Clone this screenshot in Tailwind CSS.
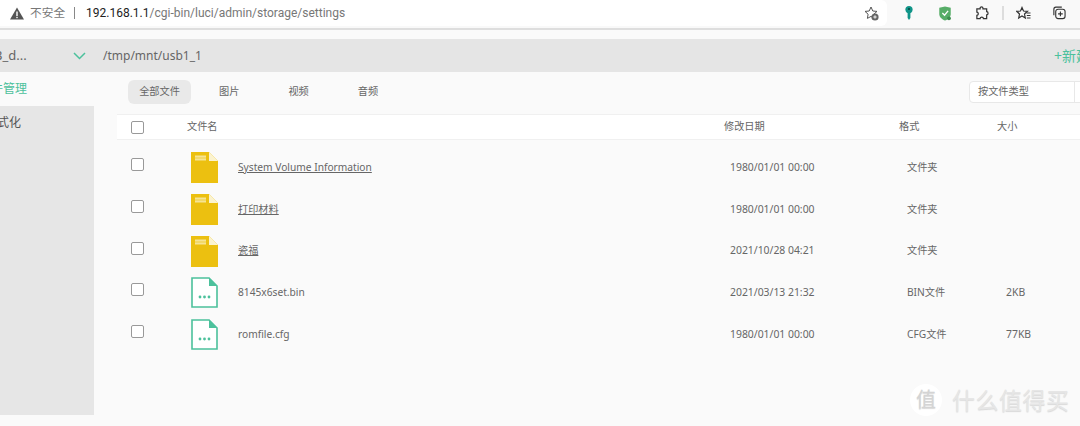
<!DOCTYPE html>
<html lang="zh-CN">
<head>
  <meta charset="UTF-8" />
  <title>存储管理</title>
  <script src="https://cdn.jsdelivr.net/npm/@tailwindcss/browser@4"></script>
</head>
<body class="w-[1080px] h-[426px] overflow-hidden relative bg-[#fafafa] text-[#666] text-[10.2px] font-['Noto_Sans','Noto_Sans_CJK_SC',sans-serif]">

  <!-- browser toolbar -->
  <header class="h-[30px] bg-[#f9f9f9] border-b-2 border-[#dedede] flex items-start">
    <div class="w-[887px] h-[26px] bg-white rounded-r-md flex items-center">
      <svg class="ml-[10px] w-[14px] h-[13px]" viewBox="0 0 14 13"><path d="M7 0.5 L14 12.5 H0 Z" fill="#555"/><rect x="6.3" y="4.5" width="1.4" height="4.5" fill="#fff"/><rect x="6.3" y="9.8" width="1.4" height="1.4" fill="#fff"/></svg>
      <span class="ml-[6px] text-[11.7px] text-[#777]">不安全</span>
      <span class="ml-[9px] w-px h-[12px] bg-[#888]"></span>
      <span class="ml-[11px] text-[12px] text-[#222] font-['Roboto','Noto_Sans_CJK_SC',sans-serif]">192.168.1.1<span class="text-[#777]">/cgi-bin/luci/admin/storage/settings</span></span>
      <svg class="ml-auto mr-[8px] w-[15px] h-[15px]" viewBox="0 0 15 15"><path d="M7 1 L8.8 5 L13 5.4 L9.9 8.2 L10.6 12.4 L7 10.4 L3.4 12.4 L4.1 8.2 L1 5.4 L5.2 5 Z" fill="none" stroke="#555" stroke-width="1"/><circle cx="11" cy="11" r="3.6" fill="#666"/><path d="M9.3 11 H12.7 M11 9.3 V12.7" stroke="#fff" stroke-width="0.9"/></svg>
    </div>
    <div class="flex items-center h-[26px] ml-[17px]">
      <svg class="w-[10px] h-[14px]" viewBox="0 0 10 14"><circle cx="5" cy="3.6" r="3.6" fill="#0f9488"/><circle cx="5" cy="3" r="1" fill="#063f3a"/><path d="M3.6 6 H6.4 V12 L5 14 L3.6 12 Z" fill="#0f9488"/></svg>
      <svg class="ml-[24px] w-[14px] h-[15px]" viewBox="0 0 15 17"><path d="M1 2 L7.5 0.5 L14 2 V9 C14 13 10 15.5 7.5 16.5 C5 15.5 1 13 1 9 Z" fill="#57ad68"/><path d="M4.5 8 L7 10.5 L11 5.5" fill="none" stroke="#fff" stroke-width="1.5"/><circle cx="12" cy="14" r="2.2" fill="#3d8f4f"/></svg>
      <svg class="ml-[23px] w-[14px] h-[14px]" viewBox="0 0 15 15"><path d="M5.5 2.2 C5.5 0.5 8.5 0.5 8.5 2.2 L8.5 3 H12.5 V6 C14.5 6 14.5 9.5 12.5 9.5 V13.5 H9 C9 11.5 5.5 11.5 5.5 13.5 H2 V10 C4 10 4 6.5 2 6.5 V3 H5.5 Z" fill="none" stroke="#333" stroke-width="1.3"/></svg>
      <span class="ml-[13px] w-[2px] h-[14px] bg-[#ddd]"></span>
      <svg class="ml-[12px] w-[15px] h-[15px]" viewBox="0 0 15 15"><path d="M6 1.5 L7.5 5 L11.5 5.3 L8.5 8 L9.3 12 L6 10 L2.7 12 L3.5 8 L0.7 5.3 L4.5 5 Z" fill="none" stroke="#333" stroke-width="1.2"/><path d="M10.5 7 H14.5 M10.8 9.5 H14.5 M10.8 12 H14.5" stroke="#333" stroke-width="1.1"/></svg>
      <svg class="ml-[21px] w-[14px] h-[14px]" viewBox="0 0 15 15"><path d="M2 10 V3.5 C2 2.2 3 1.2 4.2 1.2 H10.5" fill="none" stroke="#333" stroke-width="1.2"/><rect x="4" y="3.5" width="10" height="10" rx="2.5" fill="none" stroke="#333" stroke-width="1.2"/><path d="M9 6 V11 M6.5 8.5 H11.5" stroke="#333" stroke-width="1.2"/></svg>
    </div>
  </header>

  <!-- path bar -->
  <div class="mt-[9px] h-[33px] bg-[#e5e5e5] flex items-center overflow-hidden whitespace-nowrap">
    <span class="-ml-[6px] w-[79px] text-[13px] text-[#666]">B_d...</span>
    <svg class="w-[13px] h-[8px]" viewBox="0 0 13 8"><path d="M1 1 L6.5 6.5 L12 1" fill="none" stroke="#4cc19c" stroke-width="1.5"/></svg>
    <span class="ml-[17px] text-[12px] text-[#666]">/tmp/mnt/usb1_1</span>
    <span class="ml-auto -mr-[10px] text-[14px] text-[#4cc19c]">+新建</span>
  </div>

  <div class="flex">
    <!-- sidebar, labels run off the left edge of the shot -->
    <aside class="w-[94px] shrink-0 overflow-hidden text-[12px]">
      <div class="h-[34px] flex items-center -ml-[21px] text-[#4cc19c]">文件管理</div>
      <div class="h-[309px] bg-[#e6e6e6] pt-[8px] leading-[18px] text-[#555]"><span class="block -ml-[15px]">格式化</span></div>
    </aside>

    <main class="flex-1 pl-[23px]">
      <nav class="flex items-start justify-between pt-[8px] h-[42px]">
        <div class="flex items-center h-[24px] text-[#666]">
          <span class="w-[63px] h-[24px] ml-[11px] rounded-md bg-[#e9e9e9] flex items-center justify-center">全部文件</span>
          <span class="ml-[28px]">图片</span>
          <span class="ml-[49px]">视频</span>
          <span class="ml-[49px]">音频</span>
        </div>
        <div class="w-[130px] -mr-[19px] mt-[1px] h-[22px] bg-white border border-[#e8e8e8] rounded flex items-center pl-[8px] shrink-0">
          <span class="w-[96px]">按文件类型</span>
          <span class="w-px h-full bg-[#e8e8e8]"></span>
        </div>
      </nav>

      <div class="h-[26px] bg-white border-y border-[#f0f0f0] flex items-center text-[#666]">
        <span class="ml-[14px] w-[56px]"><span class="block w-[13px] h-[13px] border border-[#999] rounded-[2px] bg-white"></span></span>
        <span class="w-[537px]">文件名</span>
        <span class="w-[175px]">修改日期</span>
        <span class="w-[98px]">格式</span>
        <span>大小</span>
      </div>

      <div class="pt-[6.8px]">
        <div class="h-[41.7px] flex items-center">
          <span class="ml-[14px] w-[60px] -mt-[6px]"><span class="block w-[13px] h-[13px] border border-[#999] rounded-[2px] bg-white"></span></span>
          <svg class="w-[27px] h-[31px]" viewBox="0 0 27 31"><path d="M0 0 H18 L27 9 V31 H0 Z" fill="#ecc010"/><path d="M18 0 L27 9 H18 Z" fill="#fbf3cf"/><rect x="4" y="3.5" width="11" height="2.2" fill="#f6e493"/><rect x="4" y="6.3" width="11" height="2.2" fill="#f6e493"/></svg>
          <span class="ml-[20px] w-[492px] underline">System Volume Information</span>
          <span class="w-[177px] text-[10.4px]">1980/01/01 00:00</span>
          <span class="w-[99px]">文件夹</span>
          <span></span>
        </div>
        <div class="h-[41.7px] flex items-center">
          <span class="ml-[14px] w-[60px] -mt-[6px]"><span class="block w-[13px] h-[13px] border border-[#999] rounded-[2px] bg-white"></span></span>
          <svg class="w-[27px] h-[31px]" viewBox="0 0 27 31"><path d="M0 0 H18 L27 9 V31 H0 Z" fill="#ecc010"/><path d="M18 0 L27 9 H18 Z" fill="#fbf3cf"/><rect x="4" y="3.5" width="11" height="2.2" fill="#f6e493"/><rect x="4" y="6.3" width="11" height="2.2" fill="#f6e493"/></svg>
          <span class="ml-[20px] w-[492px] underline">打印材料</span>
          <span class="w-[177px] text-[10.4px]">1980/01/01 00:00</span>
          <span class="w-[99px]">文件夹</span>
          <span></span>
        </div>
        <div class="h-[41.7px] flex items-center">
          <span class="ml-[14px] w-[60px] -mt-[6px]"><span class="block w-[13px] h-[13px] border border-[#999] rounded-[2px] bg-white"></span></span>
          <svg class="w-[27px] h-[31px]" viewBox="0 0 27 31"><path d="M0 0 H18 L27 9 V31 H0 Z" fill="#ecc010"/><path d="M18 0 L27 9 H18 Z" fill="#fbf3cf"/><rect x="4" y="3.5" width="11" height="2.2" fill="#f6e493"/><rect x="4" y="6.3" width="11" height="2.2" fill="#f6e493"/></svg>
          <span class="ml-[20px] w-[492px] underline">瓷福</span>
          <span class="w-[177px] text-[10.4px]">2021/10/28 04:21</span>
          <span class="w-[99px]">文件夹</span>
          <span></span>
        </div>
        <div class="h-[41.7px] flex items-center">
          <span class="ml-[14px] w-[60px] -mt-[6px]"><span class="block w-[13px] h-[13px] border border-[#999] rounded-[2px] bg-white"></span></span>
          <svg class="w-[27px] h-[31px]" viewBox="0 0 27 31"><path d="M1 1 H18 L26 9 V30 H1 Z" fill="#fff" stroke="#4cc19c" stroke-width="1.6"/><path d="M18 0.5 L26.5 9 H18 Z" fill="#4cc19c"/><circle cx="9" cy="20" r="1.4" fill="#4cc19c"/><circle cx="13.5" cy="20" r="1.4" fill="#4cc19c"/><circle cx="18" cy="20" r="1.4" fill="#4cc19c"/></svg>
          <span class="ml-[20px] w-[492px]">8145x6set.bin</span>
          <span class="w-[177px] text-[10.4px]">2021/03/13 21:32</span>
          <span class="w-[99px]">BIN文件</span>
          <span class="text-[10.4px]">2KB</span>
        </div>
        <div class="h-[41.7px] flex items-center">
          <span class="ml-[14px] w-[60px] -mt-[6px]"><span class="block w-[13px] h-[13px] border border-[#999] rounded-[2px] bg-white"></span></span>
          <svg class="w-[27px] h-[31px]" viewBox="0 0 27 31"><path d="M1 1 H18 L26 9 V30 H1 Z" fill="#fff" stroke="#4cc19c" stroke-width="1.6"/><path d="M18 0.5 L26.5 9 H18 Z" fill="#4cc19c"/><circle cx="9" cy="20" r="1.4" fill="#4cc19c"/><circle cx="13.5" cy="20" r="1.4" fill="#4cc19c"/><circle cx="18" cy="20" r="1.4" fill="#4cc19c"/></svg>
          <span class="ml-[20px] w-[492px]">romfile.cfg</span>
          <span class="w-[177px] text-[10.4px]">1980/01/01 00:00</span>
          <span class="w-[99px]">CFG文件</span>
          <span class="text-[10.4px]">77KB</span>
        </div>
      </div>
    </main>
  </div>

  <!-- watermark over the page -->
  <div class="absolute left-[910px] top-[384px] flex items-center text-[#e6e6e6] [text-shadow:0_1px_1px_#d8d8d8]">
    <span class="w-[32px] h-[32px] rounded-full bg-white flex items-center justify-center text-[20px] text-[#d4d4d4]">值</span>
    <span class="ml-[10px] text-[23px] tracking-[0.5px] leading-none">什么值得买</span>
  </div>
</body>
</html>
